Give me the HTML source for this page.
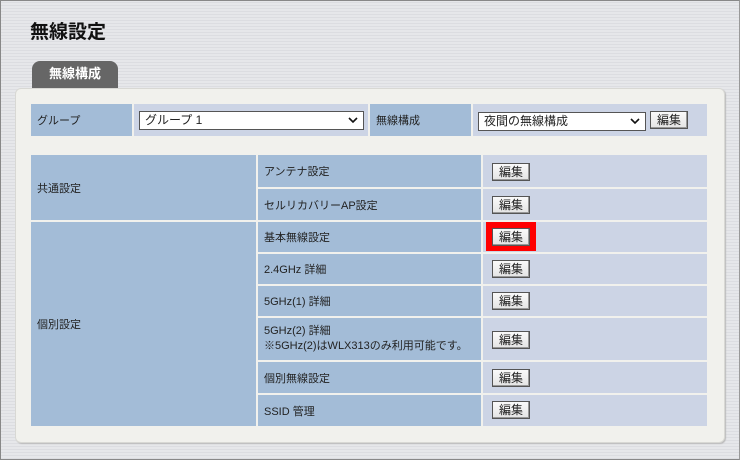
<!DOCTYPE html>
<html><head><meta charset="utf-8"><style>
*{margin:0;padding:0;box-sizing:border-box}
body{width:740px;height:460px;overflow:hidden;font-family:"Liberation Sans","Noto Sans CJK JP",sans-serif;font-size:11px;color:#222;
background:repeating-linear-gradient(180deg,#e6e7ea 0,#e6e7ea 2px,#dcdde1 2px,#dcdde1 3px);position:relative}
.frame{position:absolute;left:0;top:0;width:740px;height:460px;border:1px solid #888;border-right-color:#999}
.title{position:absolute;left:30px;top:17px;font-size:19px;font-weight:bold;color:#111}
.tab{position:absolute;left:32px;top:61px;width:86px;height:28px;background:#666;border-radius:8px 8px 0 0;color:#fff;font-weight:bold;font-size:13px;text-align:center;line-height:26px}
.panel{position:absolute;left:15px;top:88px;width:710px;height:355px;background:#f1f1ed;border-radius:6px;border:1px solid #d8d8d4;box-shadow:1px 1px 1px #bbb}
.c{position:absolute;padding-left:6px;display:flex;align-items:center}
.l{background:#a3bcd7}
.r{background:#ccd4e5}
.sel{position:absolute;height:19px;background:#fff;border:1px solid #555;font-size:12px;padding-left:5px;line-height:17px}
.sel svg{position:absolute;right:5px;top:5px}
.btn{position:absolute;width:38px;height:18px;background:linear-gradient(#fafafa,#e4e4e4);border:1px solid #555;box-shadow:inset -1px -1px 0 #999;font-size:12px;text-align:center;line-height:16px}
</style></head><body>
<div class="title">無線設定</div>
<div class="tab">無線構成</div>
<div class="panel"></div>

<div class="c l" style="left:31px;top:104px;width:101px;height:32px">グループ</div>
<div class="c r" style="left:134px;top:104px;width:234px;height:32px"></div>
<div class="sel" style="left:139px;top:111px;width:225px">グループ 1<svg width="10" height="7"><path d="M1 1L5 5L9 1" stroke="#111" stroke-width="1.6" fill="none"/></svg></div>
<div class="c l" style="left:370px;top:104px;width:101px;height:32px">無線構成</div>
<div class="c r" style="left:473px;top:104px;width:234px;height:32px"></div>
<div class="sel" style="left:478px;top:112px;width:168px">夜間の無線構成<svg width="10" height="7"><path d="M1 1L5 5L9 1" stroke="#111" stroke-width="1.6" fill="none"/></svg></div>
<div class="btn" style="left:650px;top:111px">編集</div>

<div class="c l" style="left:31px;top:155px;width:225px;height:65px">共通設定</div>
<div class="c l" style="left:31px;top:222px;width:225px;height:204px">個別設定</div>

<div class="c l" style="left:258px;top:155px;width:223px;height:32px">アンテナ設定</div>
<div class="c l" style="left:258px;top:189px;width:223px;height:31px">セルリカバリーAP設定</div>
<div class="c l" style="left:258px;top:222px;width:223px;height:30px">基本無線設定</div>
<div class="c l" style="left:258px;top:254px;width:223px;height:30px">2.4GHz 詳細</div>
<div class="c l" style="left:258px;top:286px;width:223px;height:30px">5GHz(1) 詳細</div>
<div class="c l" style="left:258px;top:318px;width:223px;height:42px;line-height:15px">5GHz(2) 詳細<br>※5GHz(2)はWLX313のみ利用可能です。</div>
<div class="c l" style="left:258px;top:362px;width:223px;height:31px">個別無線設定</div>
<div class="c l" style="left:258px;top:395px;width:223px;height:31px">SSID 管理</div>

<div class="c r" style="left:483px;top:155px;width:224px;height:32px"></div>
<div class="c r" style="left:483px;top:189px;width:224px;height:31px"></div>
<div class="c r" style="left:483px;top:222px;width:224px;height:30px"></div>
<div class="c r" style="left:483px;top:254px;width:224px;height:30px"></div>
<div class="c r" style="left:483px;top:286px;width:224px;height:30px"></div>
<div class="c r" style="left:483px;top:318px;width:224px;height:42px"></div>
<div class="c r" style="left:483px;top:362px;width:224px;height:31px"></div>
<div class="c r" style="left:483px;top:395px;width:224px;height:31px"></div>

<div class="btn" style="left:492px;top:163px">編集</div>
<div class="btn" style="left:492px;top:196px">編集</div>
<div style="position:absolute;left:486px;top:222px;width:50px;height:29px;background:#f00"></div>
<div class="btn" style="left:492px;top:228px">編集</div>
<div class="btn" style="left:492px;top:260px">編集</div>
<div class="btn" style="left:492px;top:292px">編集</div>
<div class="btn" style="left:492px;top:331px">編集</div>
<div class="btn" style="left:492px;top:369px">編集</div>
<div class="btn" style="left:492px;top:401px">編集</div>
<div class="frame"></div>
</body></html>
